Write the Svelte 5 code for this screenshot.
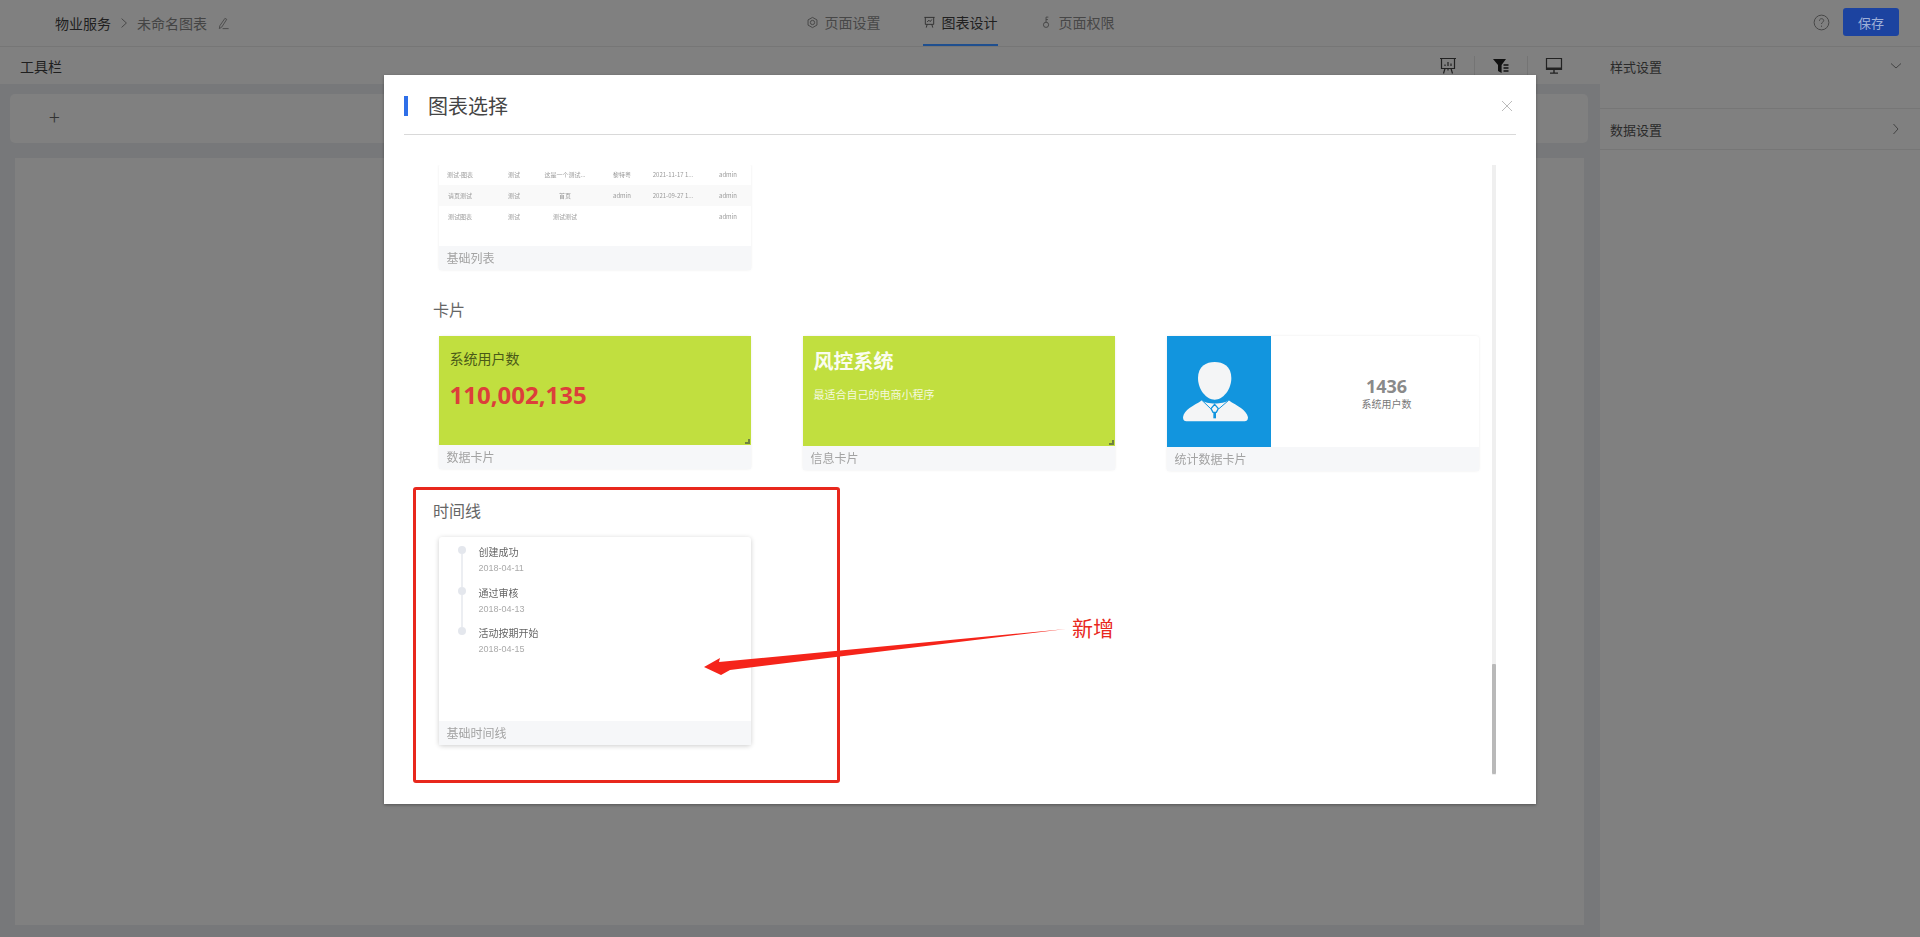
<script>
  const tabs = [
    { label: '页面设置', icon: 'gear' },
    { label: '图表设计', icon: 'board', active: true },
    { label: '页面权限', icon: 'key' }
  ];
  const rows = [
    ['测试-图表', '测试', '这是一个测试...', '黎特粤', '2021-11-17 1...', 'admin'],
    ['请页测试', '测试', '首页', 'admin', '2021-09-27 1...', 'admin'],
    ['测试图表', '测试', '测试测试', '', '', 'admin']
  ];
  const events = [
    ['创建成功', '2018-04-11'],
    ['通过审核', '2018-04-13'],
    ['活动按期开始', '2018-04-15']
  ];
</script>

<div class="page">
  <header class="topbar">
    <div class="crumbs">
      <span class="crumb-main">物业服务</span>
      <svg class="crumb-sep" viewBox="0 0 10 14" width="8" height="12"><path d="M2 1.500 8 7l-6 5.500" fill="none" stroke="#3a3a3a" stroke-width="1"/></svg>
      <span class="crumb-sub">未命名图表</span>
      <svg class="pen" viewBox="0 0 14 14" width="13" height="13"><path d="M8.500 1.500 10.500 2.500 5 11 2.500 12.500 3 9.500ZM6 12.500h6.500" fill="none" stroke="#4a4a4a" stroke-width="1"/></svg>
    </div>
    <nav class="tabs">
      {#each tabs as t}
        <div class="tab" class:active={t.active}>
          {#if t.icon === 'gear'}
            <svg viewBox="0 0 14 14" width="13" height="13"><path d="M7 1.500 11.800 4.200v5.600L7 12.500 2.200 9.800V4.200Z" fill="none" stroke="#444" stroke-width="1"/><circle cx="7" cy="7" r="2.300" fill="none" stroke="#444" stroke-width="1"/></svg>
          {:else if t.icon === 'board'}
            <svg viewBox="0 0 14 14" width="13" height="13"><path d="M1.500 1.500h11M2.500 1.500v7.500h9V1.500M4.500 9l-1 3.500M9.500 9l1 3.500M4.500 6.500 6.300 4.500 7.800 6 9.500 3.800" fill="none" stroke="#2f2f2f" stroke-width="1"/></svg>
          {:else}
            <svg viewBox="0 0 14 14" width="13" height="13"><circle cx="6.500" cy="9.500" r="2.800" fill="none" stroke="#444" stroke-width="1"/><path d="M6.500 6.700V1.200h2.500M6.500 3.800h2" fill="none" stroke="#444" stroke-width="1"/></svg>
          {/if}
          <span>{t.label}</span>
        </div>
      {/each}
    </nav>
    <div class="top-actions">
      <svg viewBox="0 0 18 18" width="17" height="17"><circle cx="9" cy="9" r="7.800" fill="none" stroke="#444" stroke-width="1"/><path d="M6.800 7.200c0-3 4.500-3 4.500-.2 0 1.700-2.300 1.700-2.300 3.600M9 12.300v1.300" fill="none" stroke="#444" stroke-width="1"/></svg>
      <button class="save">保存</button>
    </div>
  </header>

  <div class="workspace">
    <main class="editor">
      <div class="toolbar">
        <span class="toolbar-title">工具栏</span>
        <div class="tools">
          <svg viewBox="0 0 18 18" width="18" height="18"><path d="M1 1.500h16M2.500 1.500v10h13v-10M6 11.500 4.500 16.500M12 11.500l1.500 5M9 11.500v2" fill="none" stroke="#222" stroke-width="1.200"/><path d="M6 9V7.500M9 9V5M12 9V6.500" stroke="#222" stroke-width="1.200"/></svg>
          <i class="tool-sep"></i>
          <svg viewBox="0 0 18 18" width="18" height="18"><path d="M1 2h13L9.600 8v8L6 14V8Z" fill="#111"/><path d="M11.500 8h5M11.500 11h5M11.500 14h5" stroke="#111" stroke-width="1.400"/></svg>
          <i class="tool-sep"></i>
          <svg viewBox="0 0 18 18" width="18" height="18"><path d="M1.500 1.500h15v11h-15Z" fill="none" stroke="#222" stroke-width="1.200"/><path d="M1.500 10.500h15v2.500h-15ZM5 15.500h8v1.200H5Z" fill="#222"/><path d="M9 13v3" stroke="#222" stroke-width="1.400"/></svg>
        </div>
      </div>
      <div class="canvas">
        <div class="add-row"><span class="plus">+</span></div>
        <div class="stage"></div>
      </div>
    </main>
    <aside class="side">
      <div class="side-item open">
        <span>样式设置</span>
        <svg viewBox="0 0 12 12" width="12" height="12"><path d="M1 3.500 6 8l5-4.500" fill="none" stroke="#444" stroke-width="1"/></svg>
      </div>
      <div class="side-item">
        <span>数据设置</span>
        <svg viewBox="0 0 12 12" width="12" height="12"><path d="M3.500 1 8 6l-4.500 5" fill="none" stroke="#444" stroke-width="1"/></svg>
      </div>
    </aside>
  </div>

  <div class="overlay">
    <section class="modal">
      <div class="modal-head">
        <i class="head-bar"></i>
        <h2>图表选择</h2>
        <svg class="close" viewBox="0 0 12 12" width="12" height="12"><path d="M1 1l10 10M11 1 1 11" stroke="#bbb" stroke-width="1"/></svg>
      </div>
      <div class="modal-body">
        <div class="scroll">
          <div class="chart-card list-card">
            <div class="preview table">
              {#each rows as r}
                <div class="row">
                  {#each r as c}<span>{c}</span>{/each}
                </div>
              {/each}
            </div>
            <div class="label">基础列表</div>
          </div>

          <h3>卡片</h3>
          <div class="card-grid">
            <div class="chart-card">
              <div class="preview lime data">
                <p class="data-title">系统用户数</p>
                <p class="data-num">110,002,135</p>
                <i class="grip"></i>
              </div>
              <div class="label">数据卡片</div>
            </div>
            <div class="chart-card">
              <div class="preview lime info">
                <p class="info-title">风控系统</p>
                <p class="info-sub">最适合自己的电商小程序</p>
                <i class="grip"></i>
              </div>
              <div class="label">信息卡片</div>
            </div>
            <div class="chart-card">
              <div class="preview stat">
                <div class="stat-icon">
                  <svg viewBox="95 122 195 180" width="65" height="60">
                    <path d="M140 170C140 135 165 122 190 122S240 135 240 170C240 205 215 235 190 235S140 205 140 170Z" fill="#f4f5f6"/>
                    <path d="M95 288C98 265 125 255 152 237 165 250 215 250 232 237 258 255 285 265 290 288 290 297 285 300 280 300H105C100 300 95 297 95 288Z" fill="#f4f5f6"/>
                    <path d="M152 237 178 262M232 237 203 262" stroke="#1295de" stroke-width="3" fill="none"/>
                    <path d="M190 249 201 262 195 273H185L179 262Z" fill="#f4f5f6" stroke="#1295de" stroke-width="4"/>
                    <path d="M186 272H194V291H186Z" fill="#1295de"/>
                  </svg>
                </div>
                <div class="stat-text">
                  <strong>1436</strong>
                  <span>系统用户数</span>
                </div>
              </div>
              <div class="label">统计数据卡片</div>
            </div>
          </div>

          <h3 class="timeline-title">时间线</h3>
          <div class="chart-card shadow">
            <div class="preview timeline">
              {#each events as e, i}
                <div class="event">
                  <div class="rail">
                    <i class="dot"></i>
                    {#if i < 2}<i class="line"></i>{/if}
                  </div>
                  <div class="event-text">
                    <p>{e[0]}</p>
                    <time>{e[1]}</time>
                  </div>
                </div>
              {/each}
            </div>
            <div class="label">基础时间线</div>
          </div>
        </div>
        <div class="scrollbar"><i class="thumb"></i></div>
      </div>
    </section>
  </div>

  <div class="annot-box"></div>
  <svg class="annot-arrow" viewBox="0 0 380 60" width="380" height="60">
    <path d="M4 49 20 40 19 44 366 11 30 52 21 57Z" fill="#f5241a"/>
  </svg>
  <span class="annot-text">新增</span>
</div>

<style>
  :global(body) {
    margin: 0;
    font-family: "Noto Sans CJK SC", "Open Sans", sans-serif;
  }
  p, h2, h3 { margin: 0; font-weight: 400; }
  i { display: block; }

  .page {
    position: relative;
    width: 1920px;
    height: 937px;
    overflow: hidden;
    background: #808080;
    color: #1f1f1f;
    font-size: 14px;
  }

  .topbar {
    height: 46px;
    border-bottom: 1px solid #767676;
    display: grid;
    grid-template-columns: 1fr auto 1fr;
    align-items: center;
    padding: 0 21px;
  }
  .crumbs { display: flex; align-items: center; font-size: 14px; padding-left: 34px; }
  .crumb-main { color: #202020; }
  .crumb-sep { margin: 0 9px; }
  .crumb-sub { color: #444; }
  .pen { margin-left: 10px; }

  .tabs { display: flex; gap: 42px; height: 46px; }
  .tab {
    display: flex;
    align-items: center;
    gap: 6px;
    height: 46px;
    box-sizing: border-box;
    color: #474747;
    padding: 0 0 1px;
    border-bottom: 2px solid transparent;
  }
  .tab svg { margin-top: 2px; }
  .tab.active { color: #202020; border-bottom-color: #1f4f8f; }

  .top-actions { display: flex; justify-content: flex-end; align-items: center; gap: 13px; margin-top: -2px; }
  .save {
    width: 56px;
    height: 28px;
    border: 0;
    border-radius: 3px;
    background: #1c43a0;
    color: #9fb0d8;
    font: inherit;
    font-size: 13px;
    padding: 0;
  }

  .workspace { display: flex; height: 890px; }
  .editor { width: 1600px; display: flex; flex-direction: column; flex: none; }
  .toolbar {
    height: 37px;
    display: flex;
    justify-content: space-between;
    align-items: center;
    padding: 0 37px 0 20px;
    background: #808080;
    font-size: 14px;
  }
  .tools { display: flex; align-items: center; gap: 17px; }
  .tool-sep { width: 1px; height: 20px; background: #747474; }

  .canvas {
    flex: 1;
    background: #77787a;
    padding: 10px 12px 12px 10px;
    display: flex;
    flex-direction: column;
    gap: 15px;
  }
  .add-row {
    height: 49px;
    border-radius: 5px;
    background: #808080;
    display: flex;
    align-items: center;
    padding: 0 0 4px 39px;
    box-sizing: border-box;
  }
  .plus { font-size: 20px; color: #333; font-weight: 300; }
  .stage {
    flex: 1;
    margin: 0 4px 0 5px;
    background: #808080;
  }

  .side { flex: 1; }
  .side-item {
    display: flex;
    justify-content: space-between;
    align-items: center;
    padding: 0 18px 0 10px;
    height: 40px;
    border-bottom: 1px solid #767676;
    color: #2a2a2a;
    font-size: 13px;
  }
  .side-item.open { height: 62px; align-items: flex-start; padding-top: 10px; box-sizing: border-box; }
  .side-item.open svg { margin-top: 3px; }

  .overlay {
    position: absolute;
    inset: 0;
    display: flex;
    justify-content: center;
    padding-top: 75px;
  }
  .modal {
    width: 1152px;
    height: 729px;
    background: #fff;
    padding: 0 20px;
    box-sizing: border-box;
    box-shadow: 0 1px 3px rgba(0, 0, 0, .35);
  }
  .modal-head {
    height: 59px;
    border-bottom: 1px solid #d9d9d9;
    display: flex;
    align-items: center;
  }
  .head-bar { width: 4px; height: 20px; background: #2f6fe8; margin-top: 2px; }
  h2 { font-size: 20px; color: #444; margin: 2px 0 0 20px; flex: 1; line-height: 1; }
  .close { margin: 2px 3px 0 0; }

  .modal-body {
    display: flex;
    height: 610px;
    margin-top: 30px;
    padding-left: 29px;
  }
  .scroll { width: 1059px; overflow: hidden; }
  .scrollbar { width: 4px; background: #efefef; display: flex; flex-direction: column; justify-content: flex-end; }
  .thumb { height: 110px; margin-bottom: 1px; background: #b9b9b9; border-radius: 1px; }

  h3 { font-size: 16px; color: #666; line-height: 22px; margin: 28px 0 16px 0; }
  .chart-card {
    width: 312px;
    background: #fff;
    box-shadow: 0 0 3px rgba(0, 0, 0, .08);
    border-radius: 3px;
  }
  .chart-card.shadow { box-shadow: 0 1px 5px rgba(0, 0, 0, .2); margin-left: 5.500px; }
  .label {
    height: 24px;
    line-height: 24px;
    padding-left: 8px;
    background: #f6f7f9;
    color: #a3a3a3;
    font-size: 12px;
    filter: blur(.2px);
  }
  .list-card { margin-top: -1px; margin-left: 5.500px; }
  .table { height: 82px; box-sizing: border-box; filter: blur(.3px); }
  .row {
    display: grid;
    grid-template-columns: 43px 65px 37px 77px 25px 85px;
    height: 21px;
    align-items: center;
    font-size: 6px;
    color: #999;
  }
  .row span { justify-self: center; white-space: nowrap; }
  .row:nth-child(2) { background: #f9f9f9; }

  .card-grid {
    display: grid;
    grid-template-columns: 312px 312px 312px;
    column-gap: 52px;
    align-items: start;
    padding-left: 5.500px;
  }
  .lime { background: #c1df3f; position: relative; box-sizing: border-box; }
  .data { height: 109px; padding: 14px 0 0 11px; }
  .data-title { font-size: 14px; line-height: 16px; color: #4a5a18; }
  .data-num { font-size: 24px; line-height: 28px; font-weight: 700; color: #dc3f3a; margin-top: 15px; font-family: "Open Sans", sans-serif; }
  .info { height: 110px; padding: 15px 0 0 11px; }
  .info-title { font-size: 20px; line-height: 20px; font-weight: 700; color: #fbfdf0; }
  .info-sub { font-size: 11px; line-height: 12px; color: #f4f9de; margin-top: 17px; }
  .grip {
    position: absolute;
    right: 1px;
    bottom: 1px;
    width: 5px;
    height: 5px;
    border-right: 2px solid #6f8240;
    border-bottom: 2px solid #6f8240;
    box-sizing: border-box;
  }
  .stat { display: flex; height: 111px; }
  .stat-icon {
    width: 104px;
    background: #1295de;
    display: flex;
    align-items: center;
    justify-content: center;
    padding-right: 7px;
    box-sizing: border-box;
  }
  .stat-text {
    flex: 1;
    display: flex;
    flex-direction: column;
    align-items: center;
    justify-content: center;
    padding: 2px 0 0 24px;
    color: #777;
    font-size: 10px;
    line-height: 14px;
  }
  .stat-text strong { font: 700 18px/22px "Open Sans", sans-serif; color: #8a8a8a; }
  .timeline-title { margin-top: 28px; margin-bottom: 16px; }
  .timeline { height: 184px; padding: 9px 0 0 19px; box-sizing: border-box; filter: blur(.25px); }
  .event { display: flex; height: 40.500px; }
  .rail { width: 9px; display: flex; flex-direction: column; align-items: center; }
  .dot { width: 8px; height: 8px; border-radius: 50%; background: #e4e7ed; flex: none; }
  .line { width: 2px; flex: 1; background: #eceef2; }
  .event-text { margin-left: 12px; }
  .event-text p { font-size: 10px; line-height: 12px; color: #666; }
  .event-text time { display: block; font-size: 9px; line-height: 12px; color: #aaa; margin-top: 4px; font-family: "Liberation Sans", sans-serif; }

  .annot-box {
    position: absolute;
    left: 413px;
    top: 487px;
    width: 427px;
    height: 296px;
    box-sizing: border-box;
    border: 3px solid #e8281d;
    border-radius: 3px;
  }
  .annot-arrow { position: absolute; left: 700px; top: 618px; }
  .annot-text { position: absolute; left: 1072px; top: 613px; font-size: 21px; line-height: 28px; color: #e8281d; }
</style>
